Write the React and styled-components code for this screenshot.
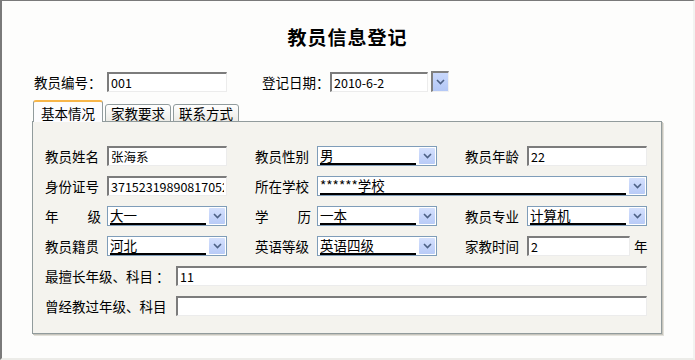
import React from 'react'
import styled, { createGlobalStyle } from 'styled-components'

const GlobalStyle = createGlobalStyle`
  html, body {
    margin: 0;
    padding: 0;
    background: #ffffff;
  }
  body {
    font-family: "Noto Sans CJK SC", "DejaVu Sans", sans-serif;
    font-size: 13.5px;
    color: #000;
  }
`

const Chevron = () => (
  <svg width='9' height='6' viewBox='0 0 9 6'>
    <path d='M1 1 L4.5 4.5 L8 1' fill='none' stroke='#4d6185' strokeWidth='1.6' />
  </svg>
)

const App = () => {
  return (
    <>
      <GlobalStyle />
      <Frame>
        <Title>教员信息登记</Title>
        <TopRow>
          <TopLabel $w={73}>教员编号：</TopLabel>
          <Input value='001' width={120} readOnly />
          <TopLabel $w={68} $gap={35}>登记日期：</TopLabel>
          <Input value='2010-6-2' width={98} readOnly />
          <DateButton><Chevron /></DateButton>
        </TopRow>
        <Tabs>
          <Tab $active>基本情况</Tab>
          <Tab>家教要求</Tab>
          <Tab>联系方式</Tab>
        </Tabs>
        <Panel>
          <Grid>
            <Field>
              <Label>教员姓名</Label>
              <Input value='张海系' width={120} readOnly />
            </Field>
            <Field>
              <Label>教员性别</Label>
              <Select width={120} value='男' />
            </Field>
            <Field>
              <Label>教员年龄</Label>
              <Input value='22' width={120} readOnly />
            </Field>

            <Field>
              <Label>身份证号</Label>
              <Input value='371523198908170521' width={120} readOnly />
            </Field>
            <Field $span={2}>
              <Label>所在学校</Label>
              <Select width={330} value='******学校' />
            </Field>

            <Field>
              <Label $spread>年<span />级</Label>
              <Select width={120} value='大一' />
            </Field>
            <Field>
              <Label $spread>学<span />历</Label>
              <Select width={120} value='一本' />
            </Field>
            <Field>
              <Label>教员专业</Label>
              <Select width={120} value='计算机' />
            </Field>

            <Field>
              <Label>教员籍贯</Label>
              <Select width={120} value='河北' />
            </Field>
            <Field>
              <Label>英语等级</Label>
              <Select width={120} value='英语四级' />
            </Field>
            <Field>
              <Label>家教时间</Label>
              <Input value='2' width={103} readOnly />
              <Unit>年</Unit>
            </Field>

            <WideField>
              <Label $wide>最擅长年级、科目 ：</Label>
              <Input value='11' width={471} readOnly />
            </WideField>
            <WideField>
              <Label $wide>曾经教过年级、科目</Label>
              <Input value='' width={471} readOnly />
            </WideField>
          </Grid>
        </Panel>
      </Frame>
    </>
  )
}

const Select = ({ width, value }) => (
  <SelectBox style={{ width }}>
    <SelectText>{value}</SelectText>
    <SelectButton><Chevron /></SelectButton>
  </SelectBox>
)

const Frame = styled('div')`
  box-sizing: border-box;
  width: 695px;
  height: 360px;
  background: #fdfdfc;
  border-top: 1px solid #7a7a7a;
  border-left: 2px solid #7a7a7a;
  border-right: 2px solid #f2f2f0;
  border-bottom: 2px solid #ecece8;
  padding-left: 30px;
  overflow: hidden;
`

const Title = styled('h1')`
  margin: 22px 0 0 0;
  height: 28px;
  line-height: 28px;
  text-align: center;
  padding-right: 30px;
  font-size: 19px;
  font-weight: bold;
  letter-spacing: 1px;
`

const TopRow = styled('div')`
  display: flex;
  align-items: center;
  margin-top: 20px;
  padding-left: 2px;
  height: 21px;
`

const TopLabel = styled('span')`
  width: ${p => p.$w}px;
  flex: none;
  margin-left: ${p => p.$gap || 0}px;
  white-space: nowrap;
`

const Input = styled('input')`
  box-sizing: border-box;
  width: ${p => p.width}px;
  height: 20px;
  margin: 0;
  padding: 0 2px;
  font-family: "Noto Sans CJK SC", "DejaVu Sans", sans-serif;
  font-size: 12.5px;
  color: #000;
  background: #fff;
  border-top: 2px solid #7c7c7c;
  border-left: 2px solid #7c7c7c;
  border-right: 1px solid #ececec;
  border-bottom: 1px solid #ececec;
  outline: none;
  flex: none;
`

const DateButton = styled('div')`
  box-sizing: border-box;
  width: 18px;
  height: 21px;
  margin-left: 3px;
  display: flex;
  align-items: center;
  justify-content: center;
  border-top: 2px solid #808080;
  border-left: 2px solid #808080;
  border-right: 1px solid #f0f0f0;
  border-bottom: 1px solid #f0f0f0;
  background: linear-gradient(#c9d8fc, #b4c8f6);
`

const Tabs = styled('div')`
  display: flex;
  align-items: flex-end;
  margin-top: 9px;
  padding-left: 1px;
  height: 21px;
  position: relative;
  z-index: 1;
  margin-bottom: -1px;
`

const Tab = styled('div')`
  box-sizing: border-box;
  height: ${p => (p.$active ? 22 : 18)}px;
  padding: ${p => (p.$active ? '1px 7px 0 7px' : '0 5px')};
  margin-right: 2px;
  display: flex;
  align-items: center;
  white-space: nowrap;
  font-size: 13.5px;
  background: ${p => (p.$active ? '#fcfcfe' : 'linear-gradient(#ffffff, #ecebe6)')};
  border: 1px solid #919b9c;
  border-bottom: ${p => (p.$active ? 'none' : '1px solid #919b9c')};
  border-top: ${p => (p.$active ? '2px solid #f7b64a' : '1px solid #919b9c')};
  border-radius: 3px 3px 0 0;
`

const Panel = styled('div')`
  box-sizing: border-box;
  width: 630px;
  height: 213px;
  background: #f4f3ee;
  border: 1px solid #919b9c;
  box-shadow: 1px 1px 0 #c6c4bc, 2px 2px 0 #e2e1da;
  padding: 24px 0 0 12px;
`

const Grid = styled('div')`
  display: grid;
  grid-template-columns: repeat(3, 181px);
  column-gap: 29px;
  row-gap: 10px;
  grid-auto-rows: 20px;
`

const Field = styled('div')`
  display: flex;
  align-items: center;
  grid-column: span ${p => p.$span || 1};
`

const WideField = styled('div')`
  display: flex;
  align-items: center;
  grid-column: 1 / -1;
`

const Label = styled('span')`
  box-sizing: border-box;
  width: ${p => (p.$wide ? 131 : 62)}px;
  flex: none;
  white-space: nowrap;
  display: flex;
  ${p => p.$spread && 'padding-right: 6px;'}
  span { flex: 1; }
`

const Unit = styled('span')`
  margin-left: 4px;
`

const SelectBox = styled('div')`
  box-sizing: border-box;
  height: 20px;
  display: flex;
  align-items: center;
  background: #fff;
  border: 1px solid #7f9db9;
  padding: 0 1px 0 2px;
  flex: none;
`

const SelectText = styled('div')`
  flex: 1;
  min-width: 0;
  height: 16px;
  line-height: 17px;
  font-size: 13.5px;
  border-bottom: 2px solid #000;
  margin-right: 3px;
  white-space: nowrap;
`

const SelectButton = styled('div')`
  width: 16px;
  height: 16px;
  flex: none;
  display: flex;
  align-items: center;
  justify-content: center;
  background: linear-gradient(#d4e0fd, #b9cbf7);
  border-radius: 1px;
`

export default App
